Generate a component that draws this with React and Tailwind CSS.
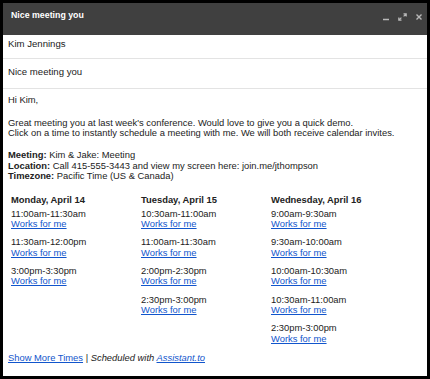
const days = [
  {
    label: 'Monday, April 14',
    times: ['11:00am-11:30am', '11:30am-12:00pm', '3:00pm-3:30pm'],
  },
  {
    label: 'Tuesday, April 15',
    times: ['10:30am-11:00am', '11:00am-11:30am', '2:00pm-2:30pm', '2:30pm-3:00pm'],
  },
  {
    label: 'Wednesday, April 16',
    times: ['9:00am-9:30am', '9:30am-10:00am', '10:00am-10:30am', '10:30am-11:00am', '2:30pm-3:00pm'],
  },
];

function TitleIcons() {
  return (
    <div className="flex items-start gap-[8px] pt-[10px] text-[#b9b9b9]">
      <svg width="8" height="8" viewBox="0 0 8 8" fill="none">
        <path d="M1 6.5H7" stroke="currentColor" strokeWidth="1.5" />
      </svg>
      <svg width="9" height="8" viewBox="0 0 9 8" fill="none" stroke="currentColor" strokeWidth="1.2">
        <path d="M5.5 0.8H8.2V3.5M8.2 0.8L5.6 3.4" />
        <path d="M0.8 4.5V7.2H3.5M0.8 7.2L3.4 4.6" />
      </svg>
      <svg width="8" height="8" viewBox="0 0 8 8" fill="none" stroke="currentColor" strokeWidth="1.4">
        <path d="M1.5 1.5L6.5 6.5M6.5 1.5L1.5 6.5" />
      </svg>
    </div>
  );
}

export default function App() {
  return (
    <div className="w-[430px] h-[379px] bg-black p-[3px] font-['Liberation_Sans',Arial,sans-serif]">
      <div className="h-full bg-white flex flex-col">
        <div className="h-[32px] shrink-0 bg-[#404040] flex justify-between pl-[8px] pr-[4px]">
          <div className="pt-[7px] text-[8.8px] leading-[10.5px] font-bold text-white">Nice meeting you</div>
          <TitleIcons />
        </div>

        <div className="h-[24px] shrink-0 border-b border-[#e3e3e3] pl-[5px] pt-[4px] text-[9.6px] leading-[10.5px] text-[#222]">
          Kim Jennings
        </div>
        <div className="h-[30px] shrink-0 border-b border-[#e3e3e3] pl-[5px] pt-[8px] text-[9.6px] leading-[10.5px] text-[#222]">
          Nice meeting you
        </div>

        <div className="pl-[5px] pt-[6px] text-[9.4px] leading-[10.5px] text-[#222]">
          <p>Hi Kim,</p>
          <p className="mt-[12px]">
            Great meeting you at last week's conference. Would love to give you a quick demo.
            <br />
            Click on a time to instantly schedule a meeting with me. We will both receive calendar invites.
          </p>
          <p className="mt-[11.5px]">
            <b>Meeting:</b> Kim &amp; Jake: Meeting
            <br />
            <b>Location:</b> Call 415-555-3443 and view my screen here: join.me/jthompson
            <br />
            <b>Timezone:</b> Pacific Time (US &amp; Canada)
          </p>

          <div className="mt-[13.5px] pl-[3px] grid grid-cols-[130px_130px_130px]">
            {days.map((d) => (
              <div key={d.label}>
                <div className="font-bold mb-[3px]">{d.label}</div>
                {d.times.map((t) => (
                  <div key={t} className="mb-[7.7px]">
                    <div>{t}</div>
                    <a href="#" className="text-[#1155cc] underline">Works for me</a>
                  </div>
                ))}
              </div>
            ))}
          </div>

          <p className="mt-[1.5px]">
            <a href="#" className="text-[#1155cc] underline">Show More Times</a>
            {' | '}
            <i>
              Scheduled with <a href="#" className="text-[#1155cc] underline">Assistant.to</a>
            </i>
          </p>
        </div>
      </div>
    </div>
  );
}
